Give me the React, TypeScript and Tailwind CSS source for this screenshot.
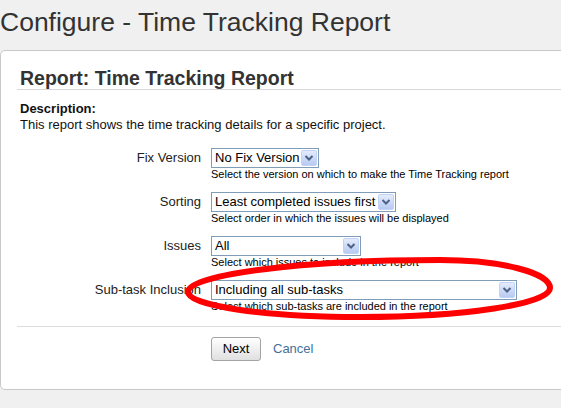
import React from "react"

type Field = {
  label: string
  value: string
  width: string
  help: string
}

const fields: Field[] = [
  {
    label: "Fix Version",
    value: "No Fix Version",
    width: "w-[108px]",
    help: "Select the version on which to make the Time Tracking report",
  },
  {
    label: "Sorting",
    value: "Least completed issues first",
    width: "w-[185px]",
    help: "Select order in which the issues will be displayed",
  },
  {
    label: "Issues",
    value: "All",
    width: "w-[150px]",
    help: "Select which issues to include in the report",
  },
  {
    label: "Sub-task Inclusion",
    value: "Including all sub-tasks",
    width: "w-[306px]",
    help: "Select which sub-tasks are included in the report",
  },
]

const SelectBox = ({ value, width }: { value: string; width: string }) => (
  <div className={`flex h-[20px] items-center border border-[#7f9db9] bg-white ${width}`}>
    <span className="flex-1 overflow-hidden whitespace-nowrap pl-[3px] text-[13px] leading-[18px] text-black">
      {value}
    </span>
    <span className="m-[1px] flex h-[16px] w-[16px] shrink-0 items-center justify-center rounded-[2px] border border-[#c3d3f5] bg-linear-to-b from-[#e4ecfd] to-[#b7caf2]">
      <svg width="14" height="14" viewBox="0 0 14 14">
        <polyline
          points="3.5,5 7,8.5 10.5,5"
          fill="none"
          stroke="#4d6185"
          strokeWidth="2"
        />
      </svg>
    </span>
  </div>
)

const FieldRow = ({ field }: { field: Field }) => (
  <div className="flex">
    <div className="w-[184px] shrink-0 text-right text-[13px] leading-[20px] text-[#222]">
      {field.label}
    </div>
    <div className="ml-[10px]">
      <SelectBox value={field.value} width={field.width} />
      <div className="whitespace-nowrap text-[11px] leading-[13px] text-black">{field.help}</div>
    </div>
  </div>
)

export default function App() {
  return (
    <div className="relative h-[408px] w-[561px] overflow-hidden bg-[#f0f0f0] font-['Liberation_Sans',Arial,sans-serif] text-[#222]">
      <h1 className="pt-[7px] text-[26.5px] leading-[30px] text-[#333]">
        Configure - Time Tracking Report
      </h1>

      <div className="mt-[13px] w-[600px] rounded-[5px] border border-[#c8c8c8] bg-white pb-[28px] pl-[16px] pt-[16px]">
        <h2 className="border-b border-[#d8d8d8] pl-[3px] text-[19.5px] font-bold leading-[22px] text-[#333]">
          Report: Time Tracking Report
        </h2>

        <div className="mt-[11px] pl-[3px] text-[13px] leading-[16px] text-[#111]">
          <div className="font-bold">Description:</div>
          <div>This report shows the time tracking details for a specific project.</div>
        </div>

        <div className="mt-[15px] flex flex-col gap-[11px]">
          {fields.map((f) => (
            <FieldRow key={f.label} field={f} />
          ))}
        </div>

        <div className="mt-[13px] flex items-center gap-[12px] border-t border-[#dddddd] pl-[194px] pt-[10px]">
          <button className="h-[24px] w-[50px] rounded-[3px] border border-[#a3a3a3] bg-linear-to-b from-white to-[#e0e0e0] text-[13px] text-black">
            Next
          </button>
          <a className="text-[13px] text-[#44709a]">Cancel</a>
        </div>
      </div>

      {/* hand-drawn red annotation around the sub-task field */}
      <svg
        className="pointer-events-none absolute left-0 top-0"
        width="561"
        height="408"
        viewBox="0 0 561 408"
      >
        <path
          d="M188,292 C188,274.4 301.4,260 440,260 C500.5,260 550,272.6 550,288 C550,304 464.5,317 360,317 C265.4,317 188,305.75 188,292 Z"
          fill="none"
          stroke="#ff0000"
          strokeWidth="6"
        />
      </svg>
    </div>
  )
}
